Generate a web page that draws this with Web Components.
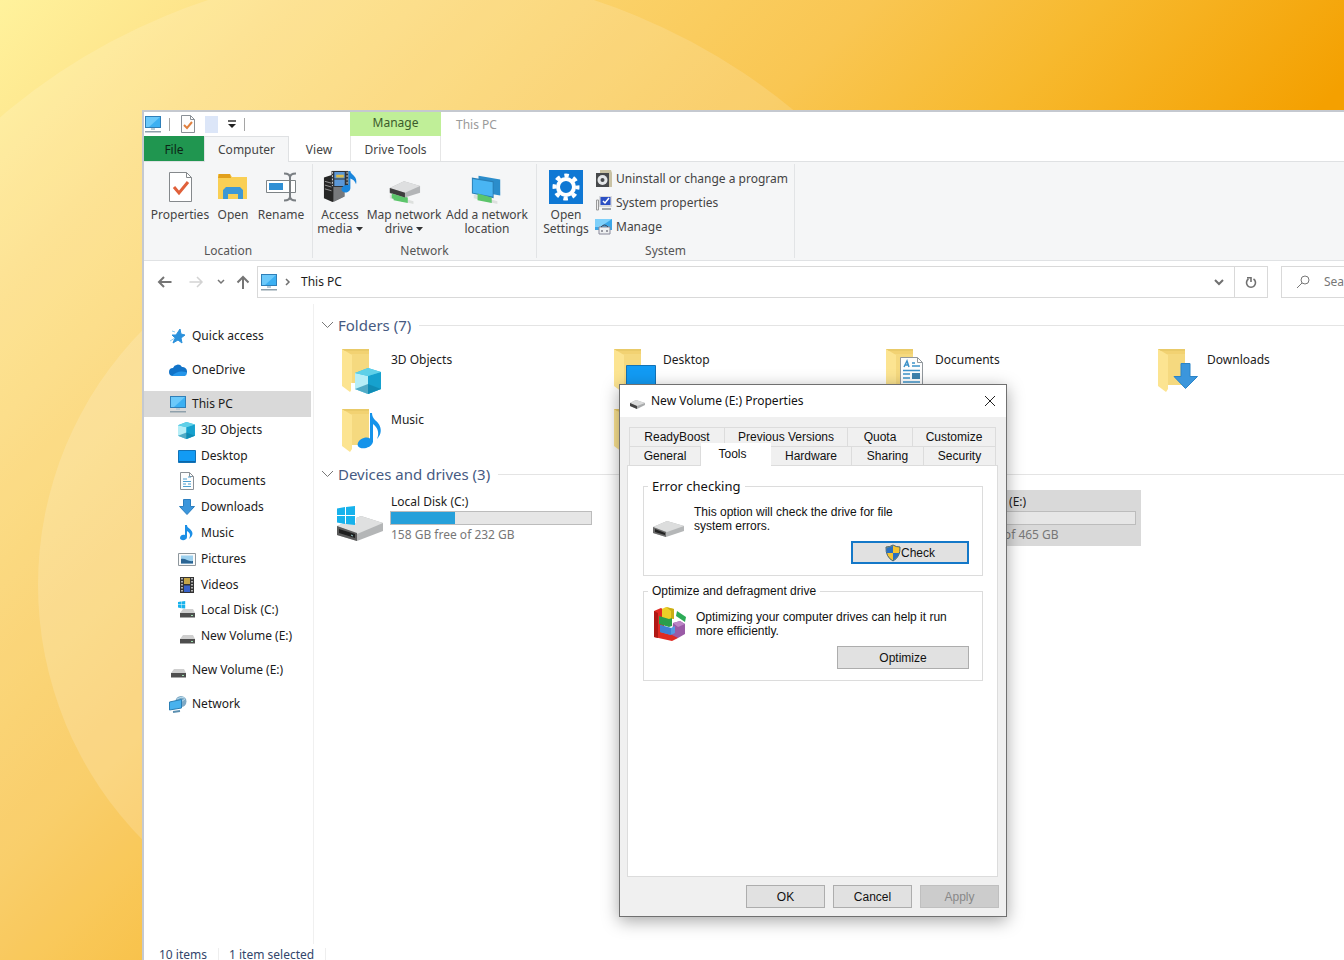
<!DOCTYPE html>
<html lang="en">
<head>
<meta charset="utf-8">
<title>This PC</title>
<style>
html, body { margin: 0; height: 100%; overflow: hidden; }
body { font: 12px/14px "Noto Sans", "Open Sans", sans-serif; color: #1b1b1b; }
</style>
</head>
<body>
<desktop-backdrop>
  <explorer-window>
    <quick-bar slot="title"></quick-bar>
    <ribbon-tabs slot="tabs"></ribbon-tabs>
    <ribbon-panel slot="ribbon">
      <ribbon-group label="Location" style="--w:169px;--pad:4px">
        <ribbon-button icon="props" style="--w:64px">Properties</ribbon-button>
        <ribbon-button icon="open" style="--w:42px">Open</ribbon-button>
        <ribbon-button icon="rename" style="--w:54px">Rename</ribbon-button>
      </ribbon-group>
      <ribbon-group label="Network" style="--w:224px">
        <ribbon-button icon="media" style="--w:52px">Access<br>media <win-icon name="tri"></win-icon></ribbon-button>
        <ribbon-button icon="netdrive" style="--w:76px">Map network<br>drive <win-icon name="tri"></win-icon></ribbon-button>
        <ribbon-button icon="netloc" style="--w:90px">Add a network<br>location</ribbon-button>
      </ribbon-group>
      <ribbon-group label="System" style="--w:258px">
        <ribbon-button icon="gear" style="--w:56px">Open<br>Settings</ribbon-button>
        <div slot="list">
          <ribbon-line icon="uninstall">Uninstall or change a program</ribbon-line>
          <ribbon-line icon="sysprops">System properties</ribbon-line>
          <ribbon-line icon="manage">Manage</ribbon-line>
        </div>
      </ribbon-group>
    </ribbon-panel>
    <address-row slot="address"></address-row>
    <nav-tree slot="nav">
      <nav-item icon="star">Quick access</nav-item>
      <nav-item icon="cloud">OneDrive</nav-item>
      <nav-branch>
        <nav-item icon="pc" current>This PC</nav-item>
        <nav-item icon="cube" child>3D Objects</nav-item>
        <nav-item icon="desk" child>Desktop</nav-item>
        <nav-item icon="doc" child>Documents</nav-item>
        <nav-item icon="down" child>Downloads</nav-item>
        <nav-item icon="note" child>Music</nav-item>
        <nav-item icon="pic" child>Pictures</nav-item>
        <nav-item icon="video" child>Videos</nav-item>
        <nav-item icon="cdrive" child>Local Disk (C:)</nav-item>
        <nav-item icon="drive" child>New Volume (E:)</nav-item>
      </nav-branch>
      <nav-item icon="drive">New Volume (E:)</nav-item>
      <nav-item icon="network">Network</nav-item>
    </nav-tree>
    <item-section label="Folders (7)">
      <folder-tile icon="f3d">3D Objects</folder-tile>
      <folder-tile icon="fdesk">Desktop</folder-tile>
      <folder-tile icon="fdoc">Documents</folder-tile>
      <folder-tile icon="fdown">Downloads</folder-tile>
      <folder-tile icon="fmusic">Music</folder-tile>
      <folder-tile icon="folder"></folder-tile>
      <folder-tile icon="folder"></folder-tile>
    </item-section>
    <item-section label="Devices and drives (3)">
      <drive-tile icon="bigc" used="32" free="158 GB free of 232 GB">Local Disk (C:)</drive-tile>
      <drive-tile icon="bigdrive" used="1" free="464 GB free of 465 GB" selected style="grid-column:3">New Volume (E:)</drive-tile>
    </item-section>
    <status-bar slot="status"></status-bar>
    <properties-dialog slot="dialog"></properties-dialog>
  </explorer-window>
</desktop-backdrop>

<script>
const noteBig = '<path d="M27 9v25.500c-2-1.500-6-1.200-9 .8-4 2.700-4.500 7-1 8.500 4 1.700 12-.5 13-6V20c4 3 7 8 4 15 7-7 3-15-1-18-3-3-4-5-4-8z" fill="#1593ea"/>';
const folderBase = '<path d="M5 2h27v36H5z" fill="#f2d272"/><path d="M13 7h19v31H13z" fill="#f5d97f"/><path d="M5 2l10 6v34l-2 3-8-6z" fill="#fce491"/><path d="M5 2h27v2H8z" fill="#e9ca68"/>';
const cubeShape = '<path d="M0 5L13 0l13 4v17l-13 5L0 21z" fill="#35bbe0"/><path d="M0 5l13 3v18L0 21z" fill="#b6eef7"/><path d="M26 4L13 8v18l13-5z" fill="#16a1ce"/><path d="M0 5L13 0l13 4-13 4z" fill="#5fd0e8"/><path d="M0 21l13-5 13 5-13 5z" fill="#0d7fa5" opacity=".6"/>';
const driveShape = '<path d="M0 22L24 12l22 7v8L20 37 0 31z" fill="#b4b6b7"/><path d="M0 22L24 12l22 7-26 11z" fill="#dfe0e0"/><path d="M0 22l20 7v8L0 31z" fill="#5a5a5a"/><path d="M2 25l16 5v4L2 29z" fill="#1f1f1f"/><path d="M14 31l2 1" stroke="#9cc"/>';
const winLogo = '<path d="M0 2.500L8 1v8H0zM9 1l9-1v9H9zM0 10h8v8l-8-1.500zM9 10h9v9l-9-1z" fill="#17b2ec"/>';
const monitor = '<path d="M1 1h16v12H1z" fill="#2f7fb8"/><path d="M2 2h14v10H2z" fill="#3cb0f2"/><path d="M2 2h14L5 12H2z" fill="#6cc9fa"/><path d="M1 16h16v1.500H1z" fill="#8fa0ab"/><path d="M7 13h4v2H7z" fill="#b9cbd6"/>';
const sheet = '<path d="M2.500.5h9l4 4v13h-13z" fill="#fdfdfd" stroke="#8a9096"/><path d="M11.500.5v4h4" fill="none" stroke="#8a9096"/>';
const smallDrive = '<path d="M4 8h10l2 4H1z" fill="#cfcfcf"/><path d="M1 12h15v4.500H1z" fill="#4e4e4e"/><path d="M12 14.500h2" stroke="#9fe0b0"/>';
const netPlug = '<path d="M1 20l25 7v3L1 24z" fill="#dde0de"/><path d="M5 19l15 4v6L5 26z" fill="#5cc56b"/>';
const ICONS = {
  tri: [7, 7, 7, '<path d="M0 1h7L3.500 5z" fill="#333"/>'],
  props: [32, 32, 32, '<path d="M5.500 1.500h17l5 5v24h-22z" fill="#fff" stroke="#85898c"/><path d="M22.500 1.500v5h5" fill="none" stroke="#85898c"/><path d="M10 16l5 6 9-11" fill="none" stroke="#e0603a" stroke-width="3"/>'],
  open: [32, 32, 32, '<path d="M1 3h12l2 3h15v22H1z" fill="#f9cf55"/><path d="M2 3h11l1 4H1z" fill="#e2a01c"/><path d="M6 28V19l3-3h14l3 3v9h-5v-5H11v5z" fill="#3d98d6"/>'],
  rename: [32, 32, 32, '<path d="M1.500 9.500h29v12h-29z" fill="#fff" stroke="#7d8386"/><path d="M4 12h14v7H4z" fill="#2f8fd4"/><path d="M19 2.500q6 0 6 4v19q0 4-6 4M31 2.500q-6 0-6 4v19q0 4 6 4" fill="none" stroke="#7a7f83" stroke-width="2"/>'],
  media: [36, 36, 34, '<path d="M1 8l9-3 12 4v19l-12 6-9-4z" fill="#262626"/><path d="M11 11l12-3v20l-12 6z" fill="#77797c"/><path d="M2 12l7 2M2 16l7 2M2 20l7 2" stroke="#999"/><path d="M9 1h18v17H9z" fill="#303235"/><path d="M12 2h11v7H12zM12 10h11v7H12z" fill="#5b97d7"/><path d="M14 5h8v3h-8z" fill="#dabb4a"/><path d="M10 2v15M25.500 2v15" stroke="#ddd" stroke-dasharray="2 1.500"/><path d="M27 1h2c0 4 8 5 6 14-1-3-3-5-6-6v10c0 4-5 6-8 4-4-3 1-8 6-7z" fill="#1a86dc"/>'],
  netdrive: [36, 36, 34, '<g transform="translate(2 6)">' + netPlug + '</g><path d="M3 19l15-7 17 5v7L19 29 3 25z" fill="#b3b5b7"/><path d="M3 19l15-7 17 5-16 7z" fill="#dedfe0"/><path d="M3 19l16 5v5L3 24z" fill="#3d3d3d"/><path d="M5 25l13 4v5L5 30z" fill="#5cc56b"/>'],
  netloc: [36, 36, 34, '<path d="M9 6l23 4v17L9 23z" fill="#2b8dcb"/><path d="M2 8l23 4v18L2 25z" fill="#2a7fb5"/><path d="M3 9.500l21 3.500v15L3 24z" fill="#49b5f3"/><g transform="translate(3 6)">' + netPlug + '</g>'],
  gear: [34, 34, 34, '<path d="M0 0h34v34H0z" fill="#0f78d4"/><g fill="none" stroke="#fff"><circle cx="17" cy="17" r="8" stroke-width="4"/><circle cx="17" cy="17" r="11.500" stroke-width="4" stroke-dasharray="4.500 4.530" stroke-dashoffset="2"/></g>'],
  uninstall: [18, 18, 18, '<path d="M5 0h11l1 3v14H5z" fill="#c9c2a4"/><path d="M1 3h13v14H1z" fill="#47494b"/><circle cx="7.500" cy="10" r="5" fill="#e4e6e8"/><circle cx="7.500" cy="10" r="2" fill="#47494b"/>'],
  sysprops: [18, 18, 18, '<path d="M1.500 6h2v10h-2z" fill="#f0f0f0" stroke="#999"/><path d="M4 2h13v11H4z" fill="#d9dadd"/><path d="M5.500 3h10v8h-10z" fill="#2b4fc4"/><path d="M8 7l2 2 4-5" stroke="#fff" stroke-width="1.500" fill="none"/><path d="M7 14h9v2H7z" fill="#a3a7ac"/>'],
  manage: [18, 18, 18, '<path d="M0 1h17v11H0z" fill="#3ba7e8"/><path d="M0 1h17L5 9H0z" fill="#7fd0fa"/><path d="M4 9h11v7H4z" fill="#eef0f1" stroke="#889"/><path d="M6 9q3.500-4 7 0M7 12v2M12 12v2" stroke="#445" fill="none"/>'],
  pc: [18, 18, 18, monitor],
  qdoc: [16, 18, 18, '<g transform="translate(-1 0)">' + sheet + '<path d="M5 10l3 3 5-6" stroke="#e08040" stroke-width="2" fill="none"/></g>'],
  star: [18, 18, 18, '<path d="M11 2l1 5 4 1-4 3 1 5-4-3-5 3 2-5L3 8h4z" fill="#2b91dc" stroke="#2b91dc"/><path d="M1 14l5-3M3 4l3 1" stroke="#8ccbf0"/>'],
  cloud: [18, 18, 18, '<path d="M4 15a4 4 0 010-8 5 5 0 019-1 4.500 4.500 0 011 9z" fill="#1173c8"/><path d="M3 15q5-6 14-4 2 4-3 4z" fill="#2596ea"/>'],
  cube: [18, 18, 18, '<g transform="translate(0 1) scale(.65)">' + cubeShape + '</g>'],
  desk: [18, 18, 18, '<path d="M.5 3.500h17v12H.5z" fill="#129bf4" stroke="#1272b6"/><path d="M1 14.500h16" stroke="#0a66aa"/>'],
  doc: [18, 18, 18, sheet + '<path d="M5 7h4M10 5h3M5 9.500h8M5 12h3M10 12h3M5 14.500h8" stroke="#4d9fd0"/>'],
  down: [18, 18, 18, '<path d="M5.500 1.500h7v7h4L9 16.500 1.500 8.500h4z" fill="#3b96dc" stroke="#2a7ec0"/>'],
  note: [18, 18, 18, '<path d="M7 1v10c-2-1-5 0-5 3s7 3 7-1V7c3 2 4 4 2 8 5-4 4-7 1-10C10 3.500 9 3 9 1z" fill="#1c8fe6"/>'],
  pic: [18, 18, 18, '<path d="M.5 3.500h17v12H.5z" fill="#fafafa" stroke="#8e979d"/><path d="M3 5.500h12v8H3z" fill="#9cd0ee"/><path d="M3 9c5-1 7 3 12 2v2.500H3z" fill="#2a6493"/>'],
  video: [18, 18, 18, '<path d="M2 1h14v16H2z" fill="#333"/><path d="M6 2h6v6H6z" fill="#c5a547"/><path d="M6 9.500h6V16H6z" fill="#3862c9"/><path d="M4 2v14M14 2v14" stroke="#ddd" stroke-width="1.500" stroke-dasharray="1.500 1.500"/>'],
  cdrive: [18, 18, 18, '<g transform="scale(.4)">' + winLogo + '</g><g transform="translate(1 0)">' + smallDrive + '</g>'],
  drive: [18, 18, 18, '<g transform="translate(1 0)">' + smallDrive + '</g>'],
  network: [18, 18, 18, '<circle cx="12" cy="6.500" r="5.500" fill="#7fa9c4"/><path d="M8 4q4-3 8-1M9 9l7-5" stroke="#b9dcee" fill="none"/><path d="M.5 7l12-2.500V13L.5 15z" fill="#48b2ee" stroke="#2b7fb5"/><path d="M4 17l7-1" stroke="#5b8fb0" stroke-width="2"/>'],
  folder: [48, 48, 48, folderBase],
  f3d: [48, 48, 48, folderBase + '<path d="M14 36h6v10h-6z" fill="#fff"/><g transform="translate(18 21)">' + cubeShape + '</g>'],
  fdesk: [48, 48, 48, folderBase + '<path d="M17.500 18.500h29v24h-29z" fill="#129bf4" stroke="#1272b6"/>'],
  fdoc: [48, 48, 48, folderBase + '<path d="M19.500 10.500h17l5 5v30h-22z" fill="#fdfdfd" stroke="#92989d"/><path d="M36.500 10.500v5h5" fill="none" stroke="#92989d"/><path d="M23 20l3-6 2 6M24 18h3M31 16h3M31 19h8M22 23.500h17M22 27h7M31 27h8M22 31h7M22 35h17" stroke="#3d92c9" fill="none" stroke-width="1.500"/><path d="M31 26h8v6h-8z" fill="#3e82ad"/>'],
  fdown: [48, 48, 48, folderBase + '<path d="M28 16.500h9v13h7.500L32.500 41.500 21 29.500h7z" fill="#3b96dc" stroke="#2a84c8"/>'],
  fmusic: [48, 48, 48, folderBase + '<g transform="translate(6 -3)">' + noteBig + '</g>'],
  bigc: [48, 40, 40, driveShape + '<path d="M0 0h19v19H0z" fill="#fff"/><g transform="translate(0 2)">' + winLogo + '</g>'],
  bigdrive: [48, 40, 40, driveShape],
  tdrive: [16, 16, 16, '<g transform="translate(0 5)"><path d="M0 5l6-3 9 3v2L7 11 0 8z" fill="#a9abac"/><path d="M0 5l6-3 9 3-8 3z" fill="#dadbdb"/><path d="M0 5l7 3v3L0 8z" fill="#444"/></g>'],
  mdrive: [32, 36, 36, '<g transform="translate(0 17)"><path d="M0 9l14-6 17 5v5L13 19 0 15z" fill="#b5b7b8"/><path d="M0 9l14-6 17 5-17 6z" fill="#dcdddd"/><path d="M0 9l13 5v5L0 15z" fill="#6c6c6c"/><path d="M2 11l10 4v2L2 14z" fill="#222"/></g>'],
  defrag: [34, 36, 36, '<path d="M1 5l7-3 3 2v20l14 4v4l-6 3L1 31z" fill="#e02a23"/><path d="M1 5l4 2v25l-4-1z" fill="#b01814"/><path d="M9 3l4-2 8 2v10H9z" fill="#edd027"/><path d="M13 1l8 2v10l-3-1V5z" fill="#c9ae16"/><path d="M20 17l7-2 5 3v10l-7 4-6-3z" fill="#9a5ba6"/><path d="M20 17l7-2 5 3-7 3z" fill="#bb86c6"/><path d="M6 10l10 3 3-1v8l-3 1-10-3z" fill="#2a9e4c"/><path d="M7 19l11 3 4-2v7l-4 2-11-3z" fill="#5499e2"/><path d="M7 19l11 3v7L7 26z" fill="#3e7fd4"/><path d="M24 5l9 6-1 5-9-6z" fill="#2cab56"/>'],
  shield: [16, 18, 18, '<path d="M8 1q3 2 7 2 .5 10-7 14Q.5 13 1 3q4 0 7-2z" fill="#f5c32f" stroke="#44606e"/><path d="M8 1.500V9H1.500Q1 6 1.500 3.500 5 3.500 8 1.500zM8 9h6.300Q13 14 8 16.500z" fill="#2a70c0"/>'],
  back: [16, 16, 16, '<path d="M14.500 8H2M7 3L2 8l5 5" fill="none" stroke="#757575" stroke-width="2"/>'],
  fwd: [16, 16, 16, '<path d="M1.500 8H13M9 3l5 5-5 5" fill="none" stroke="#d3d3d3" stroke-width="1.500"/>'],
  chev: [8, 8, 8, '<path d="M1 2l3 3 3-3" fill="none" stroke="#757575" stroke-width="1.500"/>'],
  up: [16, 16, 16, '<path d="M8 15V3M2.500 8.500L8 3l5.500 5.500" fill="none" stroke="#757575" stroke-width="2"/>'],
  crumb: [8, 8, 8, '<path d="M2 1l3 3-3 3" fill="none" stroke="#707070" stroke-width="1.500"/>'],
  drop: [12, 12, 12, '<path d="M2 4l4 4 4-4" fill="none" stroke="#707070" stroke-width="2"/>'],
  refresh: [14, 14, 14, '<path d="M9.500 4a4.500 4.500 0 11-5 0M3 2.800h4V7" fill="none" stroke="#707070" stroke-width="1.600"/>'],
  lens: [14, 14, 14, '<circle cx="9" cy="5" r="4" fill="none" stroke="#777"/><path d="M6 8l-5 5" stroke="#777"/>'],
  sect: [13, 8, 8, '<path d="M1 1l5.500 5.500L12 1" fill="none" stroke="#777"/>'],
  close: [12, 12, 12, '<path d="M1 1l10 10M11 1L1 11" stroke="#222" fill="none"/>'],
  menu: [10, 10, 10, '<path d="M1 2h8" stroke="#333" stroke-width="1.500"/><path d="M1 5h8L5 9z" fill="#222"/>'],
};

function define(name, css, render) {
  customElements.define(name, class extends HTMLElement {
    connectedCallback() {
      if (this.shadowRoot) return;
      const tpl = document.createElement('template');
      tpl.innerHTML = '<style>*{box-sizing:border-box}button{font:inherit;color:inherit;background:none;border:0;padding:0;margin:0}' + css + '</style>' + render(this);
      this.attachShadow({ mode: 'open' }).append(tpl.content.cloneNode(true));
    }
  });
}
const icon = n => `<win-icon name="${n}"></win-icon>`;

define('win-icon', ':host{display:inline-block;flex:none;line-height:0}svg{display:block}', el => {
  const [w, h, size, art] = ICONS[el.getAttribute('name')];
  return `<svg aria-hidden="true" width="${w * size / h}" height="${size}" viewBox="0 0 ${w} ${h}">${art}</svg>`;
});

define('desktop-backdrop', `
  :host{display:block;height:100%;position:relative;overflow:hidden;padding:110px 0 0 142px;box-sizing:border-box;
    background:linear-gradient(135deg,#fff29c 0%,#fddf84 12%,#f9c652 38%,#f7b92e 48%,#f4a000 62%)}
  svg{position:absolute;left:0;top:0}`,
  () => `<svg width="1344" height="1344" aria-hidden="true"><g fill="#fff"><circle cx="401" cy="585" r="616" opacity=".14"/><circle cx="401" cy="585" r="363" opacity=".16"/></g></svg><slot></slot>`);

define('explorer-window', `
  :host{display:flex;flex-direction:column;position:relative;height:calc(100% + 6px);margin-right:-168px;box-sizing:border-box;
    background:#fff;border:solid #c5c9d0;border-width:2px 0 0 2px}
  .body{flex:1;display:flex;min-height:0}
  main{flex:1;padding:11px 0 0 7px;min-width:0}`,
  () => `<slot name="title"></slot><slot name="tabs"></slot><slot name="ribbon"></slot><slot name="address"></slot>
    <div class="body"><slot name="nav"></slot><main><slot></slot></main></div><slot name="status"></slot><slot name="dialog"></slot>`);

define('quick-bar', `
  :host{display:flex;height:24px}
  .tools{width:206px;display:flex;align-items:center}
  i{width:1px;height:13px;background:#a5a5a5}
  .tools button{display:flex}
  .blank{width:13px;height:17px;background:#dce6f8;margin:0 9px}
  .manage{width:91px;background:#c0ef98;text-align:center;line-height:22px;color:#3b5c2b}
  .title{margin-left:15px;line-height:25px;color:#9a9a9a}
  .sep{margin:0 10px 0 7px}.end{margin-left:7px}`,
  () => `<div class="tools">${icon('pc')}<i class="sep"></i><button aria-label="Properties">${icon('qdoc')}</button><span class="blank"></span>
    <button aria-label="Customize toolbar">${icon('menu')}</button><i class="end"></i></div><div class="manage">Manage</div><div class="title">This PC</div>`);

define('ribbon-tabs', `
  :host{display:flex;height:26px;border-bottom:1px solid #dfe1e3;box-sizing:border-box}
  button{height:25px;padding-top:2px;text-align:center;color:#444}
  .file{width:60px;background:#209650;color:#0c2616}
  .on{width:85px;height:26px;padding-top:0;background:#f5f6f7;border:1px solid #dfe1e3;border-bottom:0}
  .view{width:60px}
  .drive{width:91px;margin-left:1px;border:solid #e6e6e6;border-width:0 1px}`,
  () => `<button class="file">File</button><button class="on">Computer</button><button class="view">View</button><button class="drive">Drive Tools</button>`);

define('ribbon-panel', ':host{display:flex;height:99px;background:#f5f6f7;border-bottom:1px solid #e0e2e4;box-sizing:border-box}', () => '<slot></slot>');

define('ribbon-group', `
  :host{display:flex;flex-direction:column;width:var(--w);box-sizing:border-box;border-right:1px solid #e2e4e6;margin:2px 0;padding-top:2px}
  .row{display:flex;flex:1;padding-left:var(--pad,1px)}
  ::slotted(div){padding-top:1px}
  .label{text-align:center;line-height:14px;color:#555}`,
  el => `<div class="row"><slot></slot><slot name="list"></slot></div><div class="label">${el.getAttribute('label')}</div>`);

define('ribbon-button', `
  :host{display:block;width:var(--w)}
  button{width:100%;display:flex;flex-direction:column;align-items:center;white-space:nowrap;color:#444;line-height:14px;padding-top:2px}
  .pic{height:40px;padding-bottom:2px;display:flex;align-items:center}`,
  el => `<button><span class="pic">${icon(el.getAttribute('icon'))}</span><span><slot></slot></span></button>`);

define('ribbon-line', `
  :host{display:block}
  button{display:flex;align-items:center;gap:3px;height:24px;padding-left:1px;white-space:nowrap;color:#444}`,
  el => `<button>${icon(el.getAttribute('icon'))}<slot></slot></button>`);

define('address-row', `
  :host{display:flex;align-items:center;height:43px;padding:0 11px 2px 13px;box-sizing:border-box}
  button{display:flex}
  .fwd{margin:0 13px 0 15px}.up{margin:0 6px 0 10px}
  .box{flex:1;display:flex;align-items:center;height:32px;border:1px solid #d9d9d9}
  .path{flex:1;display:flex;align-items:center;gap:6px;padding-left:2px}
  .path button{padding-left:3px}
  .drop{padding:0 9px}
  .refresh{align-self:stretch;align-items:center;width:33px;justify-content:center;border-left:1px solid #d9d9d9}
  label{display:flex;align-items:center;gap:14px;height:32px;width:220px;margin-left:13px;padding-left:14px;border:1px solid #d9d9d9}
  input{border:0;outline:0;padding:0;width:150px;font:inherit;background:none}
  input::placeholder{color:#777;opacity:1}`,
  () => `<button aria-label="Back">${icon('back')}</button><button class="fwd" aria-label="Forward">${icon('fwd')}</button><button aria-label="Recent locations">${icon('chev')}</button><button class="up" aria-label="Up">${icon('up')}</button>
    <div class="box"><div class="path">${icon('pc')}${icon('crumb')}<button>This PC</button></div><button class="drop" aria-label="Previous locations">${icon('drop')}</button><button class="refresh" aria-label="Refresh">${icon('refresh')}</button></div>
    <label>${icon('lens')}<input type="search" aria-label="Search" placeholder="Search This PC"></label>`);

define('nav-tree', `
  :host{display:block;width:170px;box-sizing:border-box;border-right:1px solid #f0f0f0}
  nav{display:flex;flex-direction:column;gap:8px;padding:19px 2px 0 0}
  ::slotted(*){flex:none}`, () => '<nav><slot></slot></nav>');
define('nav-branch', ':host{display:grid;grid-auto-rows:1fr;height:258px}', () => '<slot></slot>');
define('nav-item', `
  :host{display:block;min-height:0}
  :host(:not([child])){height:26px}
  a{display:flex;align-items:center;gap:5px;height:100%;padding-left:25px;color:inherit;text-decoration:none;white-space:nowrap}
  :host([child]) a{padding-left:34px}
  :host([current]) a{background:#d9d9d9}`,
  el => `<a href="#">${icon(el.getAttribute('icon'))}<slot></slot></a>`);

define('item-section', `
  :host{display:block}
  h2{display:flex;align-items:center;gap:4px;margin:0;height:20px;font-weight:400;font-size:15px;line-height:20px;color:#465a82}
  h2::after{content:"";flex:1;height:1px;background:#e4e4e4;margin-left:4px}
  .grid{display:grid;grid-template-columns:repeat(auto-fill,260px);column-gap:12px;padding:6px 0 3px 16px}`,
  el => `<h2>${icon('sect')}<span>${el.getAttribute('label')}</span></h2><div class="grid"><slot></slot></div>`);

define('folder-tile', `
  :host{display:flex;gap:6px;height:60px;box-sizing:border-box;padding-top:6px}
  span{line-height:16px;padding-top:5px}`,
  el => `${icon(el.getAttribute('icon'))}<span><slot></slot></span>`);

define('drive-tile', `
  :host{display:flex;gap:5px;height:56px;box-sizing:border-box;padding:2px 5px 0 0}
  :host([selected]){background:#d9d9d9}
  win-icon{margin-top:12px}
  .info{flex:1;display:flex;flex-direction:column;max-width:203px}
  .name{line-height:19px;padding-left:1px}
  .bar{height:14px;border:1px solid #bcbcbc;background:#e6e6e6}
  .bar i{display:block;height:100%;background:#26a0da}
  .free{line-height:16px;padding:2px 0 0 1px;color:#777}`,
  el => `${icon(el.getAttribute('icon'))}<div class="info"><span class="name"><slot></slot></span><div class="bar"><i style="width:${el.getAttribute('used')}%"></i></div><span class="free">${el.getAttribute('free')}</span></div>`);

define('status-bar', `
  :host{display:flex;height:22px;align-items:center;padding-left:15px;color:#33466b}
  span{padding-right:11px}span+span{border-left:1px solid #eee;padding-left:10px;border-right:1px solid #eee}`,
  () => '<span>10 items</span><span>1 item selected</span>');

define('dialog-button', `
  :host{display:block}
  button{width:100%;height:23px;display:flex;align-items:center;justify-content:center;background:#e1e1e1;border:1px solid #adadad;color:#111}
  :host([primary]) button{border:2px solid #1478c8}
  button:disabled{background:#ccc;border-color:#bfbfbf;color:#888}`,
  el => `<button ${el.hasAttribute('disabled') ? 'disabled' : ''}><slot></slot></button>`);

define('tool-group', `
  :host{display:block}
  fieldset{margin:0;min-width:0;border:1px solid #dcdcdc;padding:0 13px 13px 9px;height:98px}
  legend{padding:0 4px;margin-left:-5px;line-height:16px}
  legend.ui{font:13px/16px "Noto Sans",sans-serif}
  .row{display:flex;align-items:center;gap:9px;height:38px;margin-top:6px}
  .row p{margin:0;line-height:14px;white-space:nowrap}
  .act{display:flex;justify-content:flex-end;margin-top:3px}
  ::slotted(dialog-button){width:var(--btn)}`,
  el => `<fieldset><legend class="${el.getAttribute('face') || ''}">${el.getAttribute('label')}</legend><div class="row">${icon(el.getAttribute('icon'))}<p><slot></slot></p></div><div class="act"><slot name="action"></slot></div></fieldset>`);

define('properties-dialog', `
  :host{display:flex;flex-direction:column;position:absolute;left:475px;top:272px;width:388px;height:533px;box-sizing:border-box;
    background:#f0f0f0;border:1px solid #707070;box-shadow:0 4px 16px rgba(0,0,0,.35);font:12px/14px "Liberation Sans",Arial,sans-serif;color:#111}
  header{display:flex;align-items:center;gap:5px;height:32px;background:#fff;padding:0 10px;font:12px/16px "Noto Sans",sans-serif}
  header span{flex:1}header button{display:flex}
  .tabs{display:flex;margin:0 11px 0 9px;height:19px}
  .tabs.first{margin-top:10px}
  .tabs button{border:solid #dcdcdc;border-width:1px 1px 0 0;flex:none;width:var(--w)}
  .tabs button:first-child{border-left-width:1px}
  .tabs .on{background:#fff;height:24px;margin:-3px 0 -2px;padding:0 6px 3px 0;position:relative;border-color:#fff}
  .panel{flex:1;margin:0 8px 0 7px;background:#fff;border:1px solid #dcdcdc;padding:12px 14px 0 15px;display:flex;flex-direction:column;gap:7px}
  footer{display:flex;justify-content:flex-end;gap:8px;padding:8px 7px}
  footer dialog-button{width:79px}`,
  () => `<header>${icon('tdrive')}<span>New Volume (E:) Properties</span><button aria-label="Close">${icon('close')}</button></header>
    <div class="tabs first" role="tablist"><button role="tab" style="--w:96px">ReadyBoost</button><button role="tab" style="--w:123px">Previous Versions</button><button role="tab" style="--w:65px">Quota</button><button role="tab" style="--w:83px">Customize</button></div>
    <div class="tabs" role="tablist"><button role="tab" style="--w:72px">General</button><button role="tab" aria-selected="true" class="on" style="--w:70px">Tools</button><button role="tab" style="--w:81px">Hardware</button><button role="tab" style="--w:72px">Sharing</button><button role="tab" style="--w:72px">Security</button></div>
    <div class="panel">
      <tool-group label="Error checking" face="ui" icon="mdrive" style="--btn:118px">This option will check the drive for file<br>system errors.<dialog-button slot="action" primary>${icon('shield')}Check</dialog-button></tool-group>
      <tool-group label="Optimize and defragment drive" icon="defrag" style="--btn:132px">Optimizing your computer drives can help it run<br>more efficiently.<dialog-button slot="action">Optimize</dialog-button></tool-group>
    </div>
    <footer><dialog-button>OK</dialog-button><dialog-button>Cancel</dialog-button><dialog-button disabled>Apply</dialog-button></footer>`);
</script>
</body>
</html>
